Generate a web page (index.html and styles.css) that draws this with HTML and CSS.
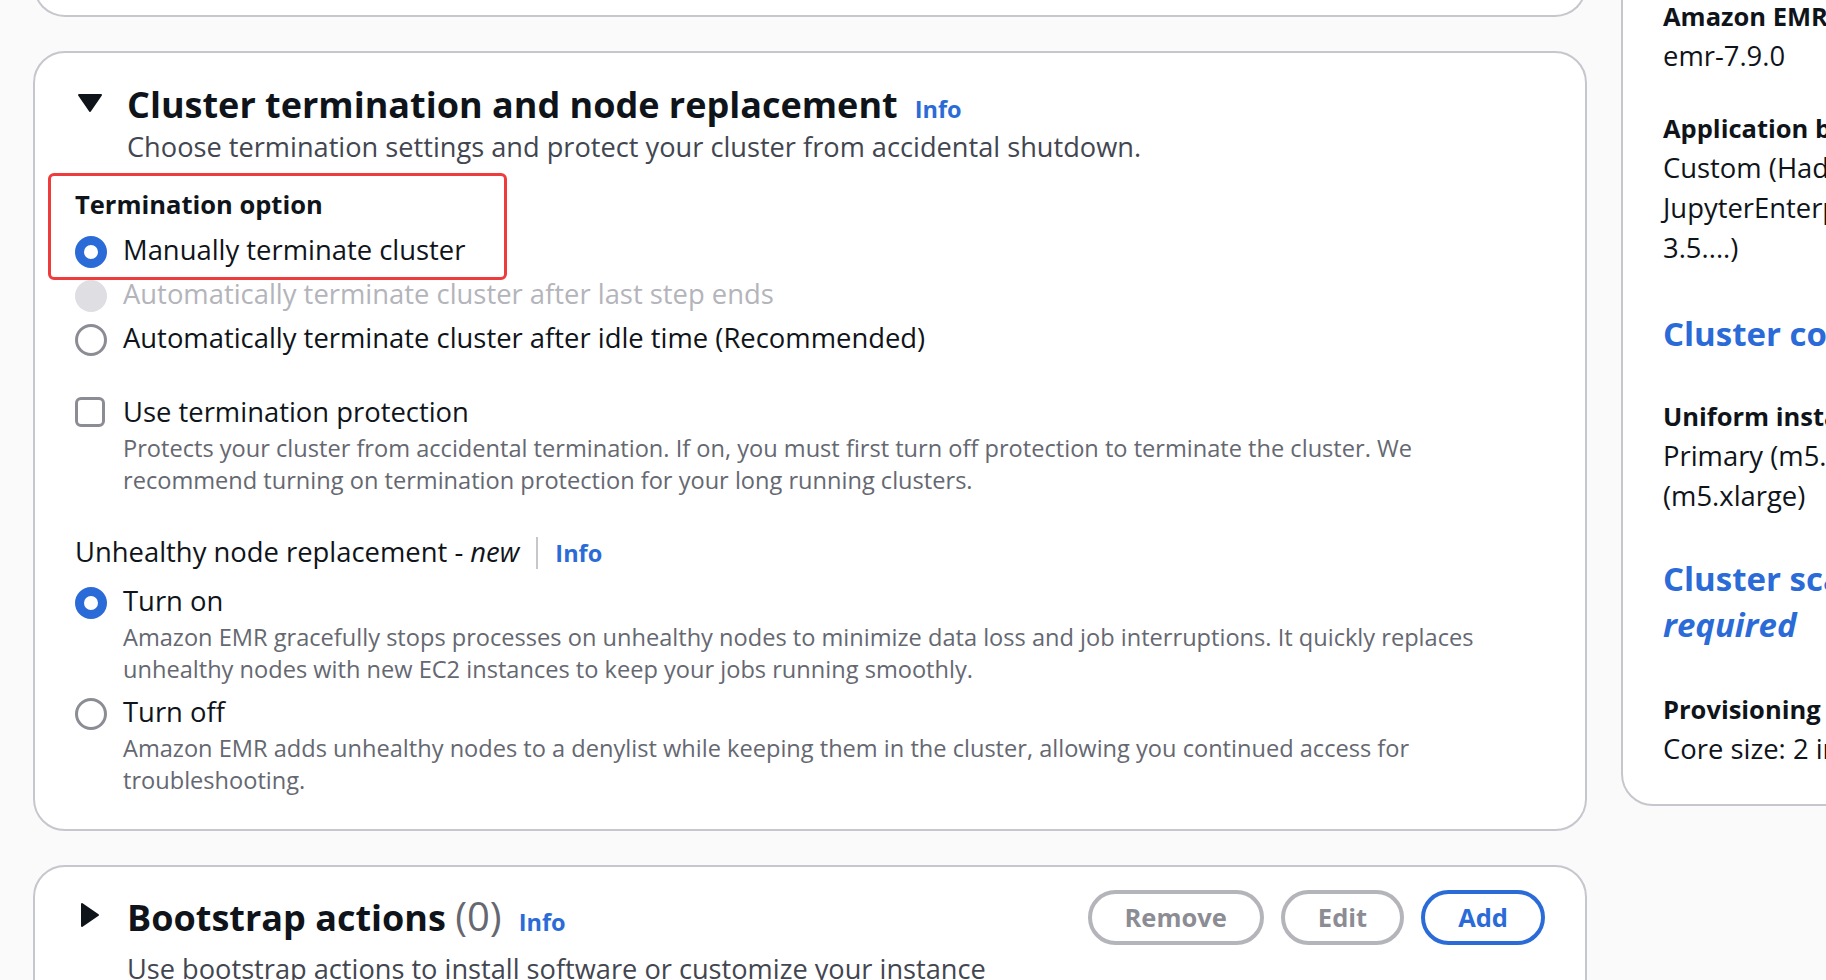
FILE: index.html
```html
<!DOCTYPE html>
<html lang="en">
<head>
<meta charset="utf-8">
<title>Create cluster - Amazon EMR</title>
<link rel="stylesheet" href="styles.css">
</head>
<body>
<div class="layout">
  <main class="main-col">
    <section class="card card-stub"></section>

    <section class="card card-termination">
      <div class="card-header">
        <div class="caret-box">
          <svg class="caret caret-down" width="26" height="20" viewBox="0 0 26 20"><polygon points="2,2 24,2 13,18"/></svg>
        </div>
        <div class="header-main">
          <div class="title-row">
            <h2 class="title">Cluster termination and node replacement</h2>
            <a class="info">Info</a>
          </div>
          <p class="header-desc">Choose termination settings and protect your cluster from accidental shutdown.</p>
        </div>
      </div>

      <div class="card-body">
        <div class="field termination">
          <div class="field-label">Termination option</div>
          <div class="radio-group">
            <div class="radio checked"><span class="radio-ctl"></span><span class="radio-text">Manually terminate cluster</span></div>
            <div class="radio disabled"><span class="radio-ctl"></span><span class="radio-text">Automatically terminate cluster after last step ends</span></div>
            <div class="radio"><span class="radio-ctl"></span><span class="radio-text">Automatically terminate cluster after idle time (Recommended)</span></div>
          </div>
          <div class="highlight"></div>
        </div>

        <div class="field checkbox-field">
          <div class="checkbox"><span class="checkbox-ctl"></span><span class="checkbox-text">Use termination protection</span></div>
          <p class="desc">Protects your cluster from accidental termination. If on, you must first turn off protection to terminate the cluster. We<br>recommend turning on termination protection for your long running clusters.</p>
        </div>

        <div class="field replacement">
          <div class="label-row">
            <span class="label-text">Unhealthy node replacement - <em>new</em></span>
            <span class="sep"></span>
            <a class="info">Info</a>
          </div>
          <div class="radio-group tiles">
            <div class="radio-item">
              <div class="radio checked"><span class="radio-ctl"></span><span class="radio-text">Turn on</span></div>
              <p class="desc">Amazon EMR gracefully stops processes on unhealthy nodes to minimize data loss and job interruptions. It quickly replaces<br>unhealthy nodes with new EC2 instances to keep your jobs running smoothly.</p>
            </div>
            <div class="radio-item">
              <div class="radio"><span class="radio-ctl"></span><span class="radio-text">Turn off</span></div>
              <p class="desc">Amazon EMR adds unhealthy nodes to a denylist while keeping them in the cluster, allowing you continued access for<br>troubleshooting.</p>
            </div>
          </div>
        </div>
      </div>
    </section>

    <section class="card card-bootstrap">
      <div class="card-header">
        <div class="caret-box">
          <svg class="caret caret-right" width="20" height="26" viewBox="0 0 20 26"><polygon points="2,2 18,13 2,24"/></svg>
        </div>
        <div class="header-main">
          <div class="title-row">
            <h2 class="title">Bootstrap actions <span class="counter">(0)</span></h2>
            <a class="info">Info</a>
          </div>
          <p class="header-desc">Use bootstrap actions to install software or customize your instance</p>
        </div>
        <div class="actions">
          <button class="btn" disabled>Remove</button>
          <button class="btn" disabled>Edit</button>
          <button class="btn btn-primary-outline">Add</button>
        </div>
      </div>
    </section>
  </main>

  <aside class="summary">
    <div class="kv">
      <div class="kv-label">Amazon EMR release</div>
      <div class="kv-value">emr-7.9.0</div>
    </div>
    <div class="kv">
      <div class="kv-label">Application bundle</div>
      <div class="kv-value">Custom (Hadoop 3.4.1, Hive 3.1.3,<br>JupyterEnterpriseGateway 2.6.0, Spark<br>3.5....)</div>
    </div>

    <h3 class="s-heading s-first">Cluster configuration</h3>
    <div class="kv kv-after-heading">
      <div class="kv-label">Uniform instance groups</div>
      <div class="kv-value">Primary (m5.xlarge), Core<br>(m5.xlarge)</div>
    </div>

    <h3 class="s-heading s-second">Cluster scaling and provisioning -<br><em>required</em></h3>
    <div class="kv kv-after-heading2">
      <div class="kv-label">Provisioning configuration</div>
      <div class="kv-value">Core size: 2 instances</div>
    </div>
  </aside>
</div>
</body>
</html>
```

FILE: styles.css
```css
html, body {
  margin: 0;
  padding: 0;
  overflow: hidden;
  background: #fafafa;
}

body {
  width: 1826px;
  height: 980px;
  font-family: "Open Sans", "Noto Sans", sans-serif;
  color: #0f141a;
}

.layout {
  display: flex;
  align-items: flex-start;
  gap: 34px;
  padding-left: 33px;
}

.main-col {
  flex: none;
  width: 1554px;
  display: flex;
  flex-direction: column;
  gap: 34px;
}

.card {
  background: #ffffff;
  border: 2px solid #c6c6cd;
  border-radius: 32px;
  box-sizing: border-box;
}

.card-stub {
  height: 60px;
  margin-top: -43px;
  border-top: none;
  border-radius: 0 0 32px 32px;
}

.card-termination {
  padding: 30px 40px 33px;
}

.card-bootstrap {
  padding: 23px 40px 40px;
}

/* header */
.card-header {
  display: flex;
  align-items: flex-start;
}

.caret-box {
  flex: none;
  width: 30px;
  margin-right: 22px;
  display: flex;
  justify-content: center;
}

.caret {
  display: block;
}

.caret polygon {
  fill: #0f141a;
  stroke: #0f141a;
  stroke-width: 2;
  stroke-linejoin: round;
}

.caret-down {
  margin-top: 10px;
}

.caret-right {
  margin-top: 12px;
}

.header-main {
  flex: 1;
  min-width: 0;
}

.card-bootstrap .header-main {
  margin-top: 6px;
}

.title-row {
  display: flex;
  align-items: baseline;
  gap: 17px;
}

.title {
  margin: 0;
  font-size: 36px;
  line-height: 44px;
  font-weight: 700;
  white-space: nowrap;
}

.counter {
  font-weight: 400;
  font-size: 40px;
  line-height: 1;
  color: #656871;
}

.info {
  color: #2b6bd8;
  font-weight: 700;
  font-size: 23.5px;
  text-decoration: none;
  cursor: pointer;
}

.header-desc {
  margin: 0;
  font-size: 27.2px;
  line-height: 40px;
  color: #424650;
  white-space: nowrap;
}

.card-bootstrap .header-desc {
  margin-top: 9px;
}

.actions {
  flex: none;
  display: flex;
  gap: 17px;
  margin-left: auto;
}

.btn {
  height: 55px;
  box-sizing: border-box;
  padding: 0 33px;
  border: 4px solid #b4b4bb;
  border-radius: 30px;
  background: #ffffff;
  color: #8c8c94;
  font-family: inherit;
  font-size: 25.5px;
  font-weight: 700;
  line-height: 47px;
}

.btn-primary-outline {
  border-color: #2b6bd8;
  color: #2b6bd8;
}

/* body */
.field-label {
  font-size: 25.5px;
  font-weight: 700;
  line-height: 40px;
}

.termination {
  position: relative;
  margin-top: 17px;
}

.highlight {
  position: absolute;
  left: -27px;
  top: -11px;
  width: 459px;
  height: 107px;
  box-sizing: border-box;
  border: 3px solid #ef3b3b;
  border-radius: 6px;
  pointer-events: none;
}

.radio-group {
  margin-top: 6px;
  display: flex;
  flex-direction: column;
  gap: 4px;
}

.radio-group.tiles {
  margin-top: 8px;
  gap: 7px;
}

.radio {
  display: flex;
  align-items: flex-start;
  gap: 16px;
  font-size: 27.4px;
  line-height: 40px;
  white-space: nowrap;
}

.radio-ctl {
  flex: none;
  width: 32px;
  height: 32px;
  margin-top: 6px;
  box-sizing: border-box;
  border-radius: 50%;
  border: 3px solid #8c8c94;
  background: #ffffff;
}

.radio.checked .radio-ctl {
  border: 9.5px solid #2b6bd8;
}

.radio.disabled .radio-ctl {
  border: none;
  background: #dedee3;
}

.radio.disabled .radio-text {
  color: #b4b4bb;
}

.checkbox-field {
  margin-top: 34px;
}

.checkbox {
  display: flex;
  align-items: flex-start;
  gap: 18px;
  font-size: 27.4px;
  line-height: 40px;
}

.checkbox-ctl {
  flex: none;
  width: 30px;
  height: 30px;
  margin-top: 5px;
  box-sizing: border-box;
  border: 3px solid #8c8c94;
  border-radius: 6px;
  background: #ffffff;
}

.desc {
  margin: 0 0 0 48px;
  font-size: 23.6px;
  line-height: 32px;
  color: #656871;
  white-space: nowrap;
}

.replacement {
  margin-top: 36px;
}

.label-row {
  display: flex;
  align-items: baseline;
  font-size: 27.4px;
  line-height: 40px;
}

.sep {
  align-self: center;
  width: 2px;
  height: 32px;
  margin: 0 17px;
  background: #c6c6cd;
}

/* summary side panel */
.summary {
  flex: none;
  width: 560px;
  margin-top: -100px;
  box-sizing: border-box;
  padding: 94px 40px 35px;
  background: #ffffff;
  border: 2px solid #c6c6cd;
  border-radius: 32px;
}

.kv + .kv {
  margin-top: 32px;
}

.kv-label {
  font-size: 25.5px;
  font-weight: 700;
  line-height: 40px;
  white-space: nowrap;
}

.kv-value {
  font-size: 27.4px;
  line-height: 40px;
  white-space: nowrap;
}

.s-heading {
  margin: 0;
  font-size: 33px;
  line-height: 46px;
  font-weight: 700;
  color: #2b6bd8;
  white-space: nowrap;
}

.s-first {
  margin-top: 43px;
}

.s-second {
  margin-top: 40px;
}

.kv-after-heading {
  margin-top: 39px;
}

.kv-after-heading2 {
  margin-top: 41px;
}
```
